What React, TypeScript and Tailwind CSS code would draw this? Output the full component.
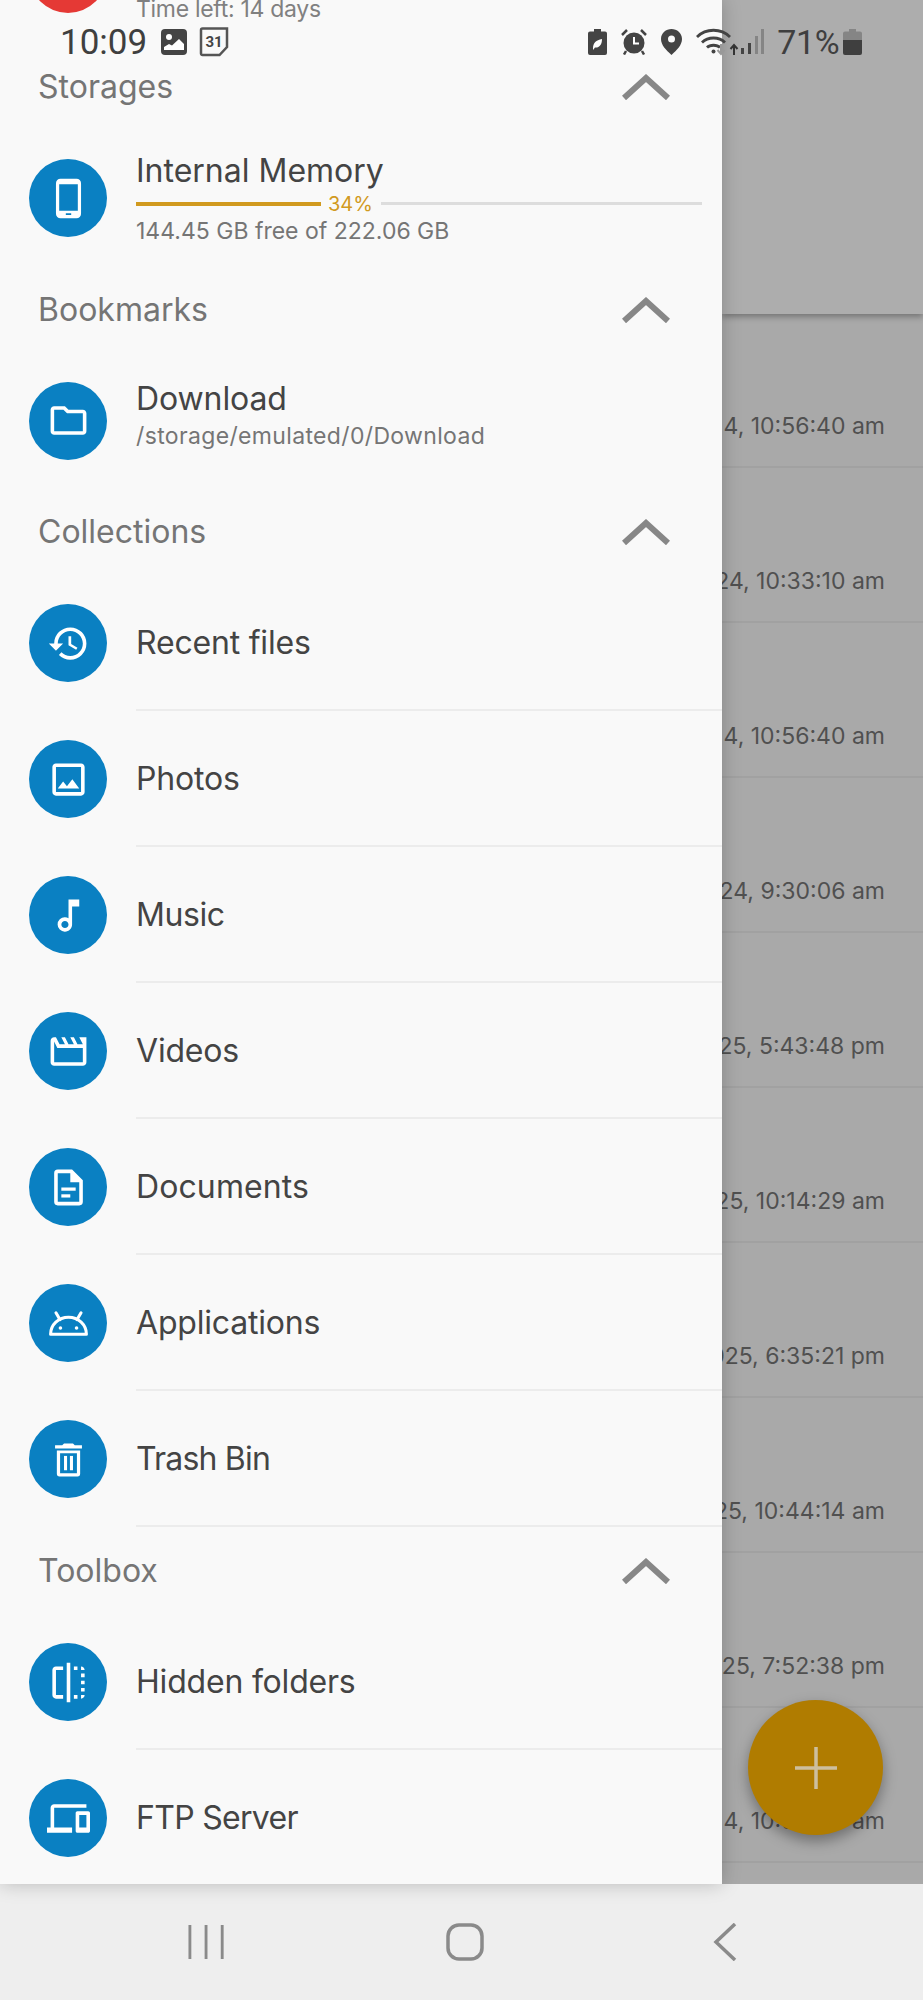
import type { ReactNode } from 'react';
import { MdFlip, MdHistory, MdOutlineDevices, MdOutlineFolder, MdOutlineImage, MdOutlineMovie, MdOutlineMusicNote } from 'react-icons/md';

function PhoneIcon() {
  return (
    <svg viewBox="0 0 24 24" className="h-[43px] w-[43px]" fill="white">
      <path
        fillRule="evenodd"
        d="M7.5 1h9A2.5 2.5 0 0 1 19 3.5v17a2.5 2.5 0 0 1-2.5 2.500h-9A2.500 2.500 0 0 1 5 20.500v-17A2.500 2.500 0 0 1 7.500 1zM6.800 4v14.800h10.400V4H6.800zM10.500 20.300v.9h3v-.9h-3z"
      />
    </svg>
  );
}

function DocIcon() {
  return (
    <svg viewBox="0 0 24 24" className="h-[43px] w-[43px]" fill="white">
      <path
        fillRule="evenodd"
        d="M6 2h8l6 6v12a2 2 0 0 1-2 2H6a2 2 0 0 1-2-2V4a2 2 0 0 1 2-2zm0 2v16h12V9h-5V4H6z"
      />
      <rect x="8" y="12" width="8" height="1.800" />
      <rect x="8" y="15.800" width="5" height="1.800" />
    </svg>
  );
}

function AndroidIcon() {
  return (
    <svg viewBox="0 0 24 24" className="h-[43px] w-[43px]" fill="none" stroke="white" strokeWidth="1.700" strokeLinecap="round">
      <path d="M2 18a10 9.500 0 0 1 20 0z" strokeLinejoin="round" />
      <path d="M7.200 9.800 5 6M16.800 9.800 19 6" />
      <circle cx="7.500" cy="14.500" r="1" fill="white" stroke="none" />
      <circle cx="16.500" cy="14.500" r="1" fill="white" stroke="none" />
    </svg>
  );
}

function TrashIcon() {
  return (
    <svg viewBox="0 0 24 24" className="h-[43px] w-[43px]" fill="white">
      <path d="M15.500 4l-1-1h-5l-1 1H4.500v1.800h15V4h-4z" />
      <path fillRule="evenodd" d="M5.500 7h13v13a1.500 1.500 0 0 1-1.500 1.500H7A1.500 1.500 0 0 1 5.500 20V7zm1.800 1.500v11.200h9.400V8.500H7.300z" />
      <rect x="9.500" y="10" width="1.700" height="8" />
      <rect x="12.800" y="10" width="1.700" height="8" />
    </svg>
  );
}

function Circle({ children }: { children: ReactNode }) {
  return <div className="flex h-[78px] w-[78px] shrink-0 items-center justify-center rounded-full bg-[#0a80c2] text-white">{children}</div>;
}

function SectionHeader({ title }: { title: string }) {
  return (
    <div className="flex h-[87px] shrink-0 items-center justify-between pl-[38px] pr-[52px]">
      <span className="text-[32px] text-[#757575]">{title}</span>
      <svg viewBox="0 0 48 26" className="h-[26px] w-[48px]" fill="none" stroke="#878787" strokeWidth="6">
        <path d="M2 24 24 4l22 20" />
      </svg>
    </div>
  );
}

function NavRow({ icon, label, tracking = 'tracking-[-0.2px]' }: { icon: ReactNode; label: string; tracking?: string }) {
  return (
    <div className="flex h-[136px] shrink-0">
      <div className="flex w-[136px] shrink-0 items-center justify-center">
        <Circle>{icon}</Circle>
      </div>
      <div className={`flex flex-1 items-center border-b-2 border-[#ececec] pt-[2px] text-[32px] text-[#444444] ${tracking}`}>{label}</div>
    </div>
  );
}

function StatusBar() {
  return (
    <div className="absolute left-0 top-[27px] z-30 flex h-[30px] w-[923px] items-center font-['Roboto',sans-serif] text-[#3f3f3f]">
      <span className="ml-[60px] text-[35px] leading-none">10:09</span>
      <svg viewBox="0 0 26 26" className="ml-[14px] h-[26px] w-[26px]">
        <rect width="26" height="26" rx="4" fill="#444" />
        <circle cx="8" cy="8" r="3" fill="white" />
        <path d="M3 21v-3l5-3 3 1.500L18 10l5 5v6z" fill="white" />
      </svg>
      <svg viewBox="0 0 30 30" className="ml-[12px] h-[30px] w-[30px]">
        <path d="M2 3a1.500 1.500 0 0 1 1.500-1.500H28V20l-7.500 8H3.500A1.500 1.500 0 0 1 2 26.500z" fill="none" stroke="#555" strokeWidth="2.500" />
        <text x="15" y="20" textAnchor="middle" fontSize="15" fontWeight="700" fill="#444" fontFamily="Roboto">31</text>
      </svg>
      <svg viewBox="0 0 19 26" className="ml-[359px] h-[26px] w-[19px]">
        <path d="M6 0h7v2.500h4a2 2 0 0 1 2 2V24a2 2 0 0 1-2 2H2a2 2 0 0 1-2-2V4.500a2 2 0 0 1 2-2h4z" fill="#444" />
        <path d="M5 19c0-5 3-8 9-9 0 6-3 9-7 8.500L5 21z" fill="white" />
      </svg>
      <svg viewBox="0 0 26 26" className="ml-[14px] h-[26px] w-[26px]">
        <circle cx="13" cy="14" r="10.500" fill="#444" />
        <path d="M13 8v6.500h5" fill="none" stroke="white" strokeWidth="2" />
        <path d="M1 6l5-5M25 6l-5-5M5 22l-2 3.500M21 22l2 3.500" stroke="#444" strokeWidth="2.500" />
      </svg>
      <svg viewBox="0 0 21 26" className="ml-[14px] h-[26px] w-[21px]">
        <path fillRule="evenodd" d="M10.500 0C16 0 21 4 21 10c0 6-5 11-10.500 16C5 21 0 16 0 10 0 4 5 0 10.500 0zm0 6.500a3.500 3.500 0 1 0 0 7 3.500 3.500 0 0 0 0-7z" fill="#444" />
      </svg>
      <svg viewBox="0 0 46 28" className="ml-[13px] h-[28px] w-[46px]" fill="none">
        <path d="M2 9c9-9 24-9 33 0M7 14.500c6-6 17-6 23 0M12 19.500c3-3 10-3 13 0" stroke="#444" strokeWidth="2.800" />
        <circle cx="18.500" cy="23.500" r="2" fill="#444" />
        <path d="M39 27v-9M35.500 21l3.500-4 3.500 4" stroke="#333" strokeWidth="2" />
        <path d="M26 16v9M22.500 22l3.500 4 3.500-4" stroke="#999" strokeWidth="2" />
      </svg>
      <svg viewBox="0 0 24 26" className="ml-[-1px] h-[26px] w-[24px]">
        <rect x="1" y="19" width="3" height="6" fill="#444" />
        <rect x="8" y="14" width="3" height="11" fill="#444" />
        <rect x="15" y="7" width="3" height="18" fill="#858585" />
        <rect x="21" y="0" width="3" height="25" fill="#858585" />
      </svg>
      <span className="ml-[13px] text-[34px] leading-none tracking-[-0.3px]">71%</span>
      <svg viewBox="0 0 19 26" className="ml-[4px] h-[26px] w-[19px]">
        <path d="M6 0h7v2.500h4a2 2 0 0 1 2 2V11H0V4.500a2 2 0 0 1 2-2h4z" fill="#858585" />
        <path d="M0 11h19v13a2 2 0 0 1-2 2H2a2 2 0 0 1-2-2z" fill="#3f3f3f" />
      </svg>
    </div>
  );
}

const timestamps = [
  '4, 10:56:40 am',
  '24, 10:33:10 am',
  '4, 10:56:40 am',
  '24, 9:30:06 am',
  '025, 5:43:48 pm',
  '25, 10:14:29 am',
  '025, 6:35:21 pm',
  '25, 10:44:14 am',
  '025, 7:52:38 pm',
  '4, 10:56:40 am',
];

export default function App() {
  return (
    <div className="relative flex h-[2000px] w-[923px] flex-col overflow-hidden bg-[#eeeeee] font-['Inter',sans-serif]">
      <div className="flex h-[1884px] shrink-0">
        <div className="relative z-10 flex w-[722px] shrink-0 flex-col overflow-hidden bg-[#f9f9f9] shadow-[0_0_18px_rgba(0,0,0,0.22)]">
          <div className="mb-[21px] flex h-[22px] shrink-0 overflow-hidden">
            <div className="flex w-[136px] shrink-0 items-end justify-center pb-[9px]">
              <div className="h-[78px] w-[78px] shrink-0 rounded-full bg-[#e53935]" />
            </div>
            <div className="flex items-end text-[23px] leading-[26px] tracking-[-0.3px] text-[#808080]">Time left: 14 days</div>
          </div>

          <SectionHeader title="Storages" />
          <div className="flex h-[136px] shrink-0">
            <div className="flex w-[136px] shrink-0 items-center justify-center">
              <Circle>
                <PhoneIcon />
              </Circle>
            </div>
            <div className="flex flex-1 flex-col pt-[21px]">
              <div className="text-[32px] leading-[40px] text-[#444444]">Internal Memory</div>
              <div className="flex h-[25px] items-center">
                <div className="h-[4px] w-[185px] bg-[#d19a1f]" />
                <span className="ml-[7px] text-[20px] leading-none text-[#d19a1f]">34%</span>
                <div className="ml-[8px] h-[3px] w-[321px] bg-[#dddddd]" />
              </div>
              <div className="text-[23px] leading-[30px] text-[#757575]">144.45 GB free of 222.06 GB</div>
            </div>
          </div>

          <SectionHeader title="Bookmarks" />
          <div className="flex h-[135px] shrink-0">
            <div className="flex w-[136px] shrink-0 items-center justify-center">
              <Circle>
                <MdOutlineFolder size={43} />
              </Circle>
            </div>
            <div className="flex flex-1 flex-col pt-[27px]">
              <div className="text-[32px] leading-[38px] tracking-[-0.1px] text-[#444444]">Download</div>
              <div className="text-[23px] leading-[37px] tracking-[0.35px] text-[#757575]">/storage/emulated/0/Download</div>
            </div>
          </div>

          <SectionHeader title="Collections" />
          <NavRow icon={<MdHistory size={43} />} label="Recent files" />
          <NavRow icon={<MdOutlineImage size={43} />} label="Photos" />
          <NavRow icon={<MdOutlineMusicNote size={43} />} label="Music" tracking="tracking-[-0.4px]" />
          <NavRow icon={<MdOutlineMovie size={43} />} label="Videos" />
          <NavRow icon={<DocIcon />} label="Documents" tracking="tracking-[0.1px]" />
          <NavRow icon={<AndroidIcon />} label="Applications" />
          <NavRow icon={<TrashIcon />} label="Trash Bin" tracking="tracking-[-0.8px]" />

          <SectionHeader title="Toolbox" />
          <NavRow icon={<MdFlip size={43} />} label="Hidden folders" />
          <NavRow icon={<MdOutlineDevices size={43} />} label="FTP Server" tracking="tracking-[-0.7px]" />
        </div>

        <div className="flex min-w-0 flex-1 flex-col overflow-hidden bg-[#a9a9a9]">
          <div className="h-[314px] shrink-0 bg-[#adadad] shadow-[0_3px_6px_rgba(0,0,0,0.3)]" />
          {timestamps.map((t, i) => (
            <div
              key={i}
              className={`flex shrink-0 items-end justify-end whitespace-nowrap border-b-2 border-[#a1a1a1] pb-[27px] pr-[38px] text-[23px] leading-[26px] text-[#505050] ${i === 0 ? 'h-[154px]' : 'h-[155px]'}`}
            >
              {t}
            </div>
          ))}
        </div>
      </div>

      <div className="flex flex-1 items-center bg-[#eeeeee]">
        <div className="flex w-full items-center">
          <svg viewBox="0 0 40 38" className="ml-[188px] h-[38px] w-[38px]" fill="none" stroke="#8a8a8a" strokeWidth="3">
            <path d="M2 1v36M19 1v36M36 1v36" />
          </svg>
          <svg viewBox="0 0 38 38" className="ml-[220px] h-[38px] w-[38px]" fill="none" stroke="#8a8a8a" strokeWidth="3.500">
            <rect x="2" y="2" width="34" height="34" rx="11" />
          </svg>
          <svg viewBox="0 0 24 38" className="ml-[229px] h-[38px] w-[24px]" fill="none" stroke="#8a8a8a" strokeWidth="3.500">
            <path d="M22 1 3 19l19 18" />
          </svg>
        </div>
      </div>

      <StatusBar />

      <div className="absolute left-[748px] top-[1700px] z-20 flex h-[135px] w-[135px] items-center justify-center rounded-full bg-[#b07c00] shadow-[0_6px_14px_rgba(0,0,0,0.35)]">
        <svg viewBox="0 0 42 42" className="h-[42px] w-[42px]" stroke="#cdbf9e" strokeWidth="3.500">
          <path d="M21 0v42M0 21h42" />
        </svg>
      </div>
    </div>
  );
}
